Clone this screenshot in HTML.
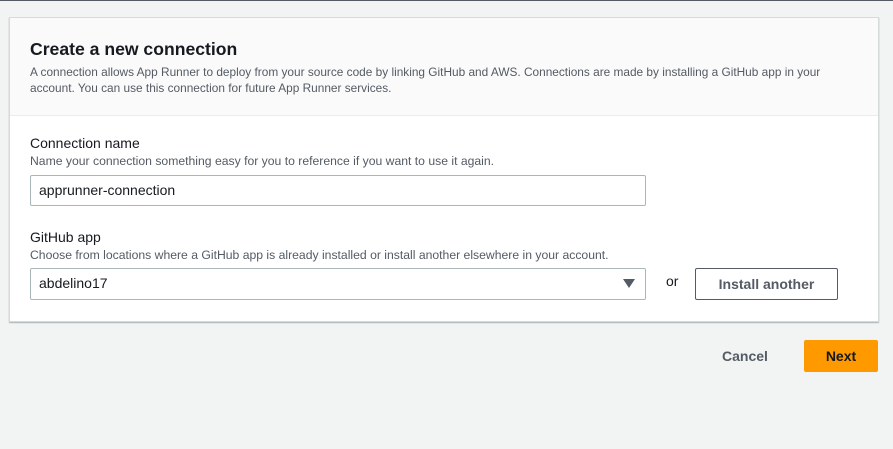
<!DOCTYPE html>
<html><head><style>
body{margin:0;width:893px;height:449px;background:#f2f3f3;font-family:"Liberation Sans",sans-serif;position:relative;overflow:hidden;color:#16191f}
.top{position:absolute;left:0;top:0;width:893px;height:1px;background:#545b64}
.card{position:absolute;left:9px;top:17px;width:868px;height:303px;background:#fff;border:1px solid #d5dbdb;box-shadow:0 1px 1px rgba(0,28,36,.3)}
.hdr{height:97px;background:#fafafa;border-bottom:1px solid #eaeded}
.abs{position:absolute;white-space:nowrap}
h1{margin:0;font-size:17.6px;font-weight:bold;position:absolute;left:20px;top:21px}
.d{font-size:11.85px;color:#545b64;line-height:16px}
.h{font-size:12.2px;color:#545b64;line-height:16px}
.l{font-size:14px;color:#16191f}
.in{position:absolute;border:1px solid #aab7b8;border-radius:2px;box-sizing:border-box;font-size:14px;padding-left:8px;line-height:29px}
.btn{position:absolute;box-sizing:border-box;font-size:14px;font-weight:bold;text-align:center;border-radius:2px}
</style></head><body>
<div class="top"></div>
<div class="card">
<div class="hdr">
<h1>Create a new connection</h1>
<div class="abs d" style="left:20px;top:46px">A connection allows App Runner to deploy from your source code by linking GitHub and AWS. Connections are made by installing a GitHub app in your<br>account. You can use this connection for future App Runner services.</div>
</div>
</div>
<div class="abs l" style="left:30px;top:135px">Connection name</div>
<div class="abs h" style="left:30px;top:153px">Name your connection something easy for you to reference if you want to use it again.</div>
<div class="in" style="left:30px;top:175px;width:616px;height:31px">apprunner-connection</div>
<div class="abs l" style="left:30px;top:229px">GitHub app</div>
<div class="abs h" style="left:30px;top:247px">Choose from locations where a GitHub app is already installed or install another elsewhere in your account.</div>
<div class="in" style="left:30px;top:268px;width:616px;height:32px">abdelino17</div>
<svg class="abs" style="left:623px;top:279px" width="12" height="10"><path d="M0 0H12L6 9Z" fill="#545b64"/></svg>
<div class="abs l" style="left:666px;top:273px">or</div>
<div class="btn" style="left:695px;top:268px;width:143px;height:32px;border:1px solid #545b64;color:#545b64;line-height:30px">Install another</div>
<div class="btn" style="left:712px;top:340px;width:66px;height:32px;color:#545b64;line-height:32px">Cancel</div>
<div class="btn" style="left:804px;top:340px;width:74px;height:32px;background:#ff9900;color:#16191f;line-height:32px">Next</div>
</body></html>
